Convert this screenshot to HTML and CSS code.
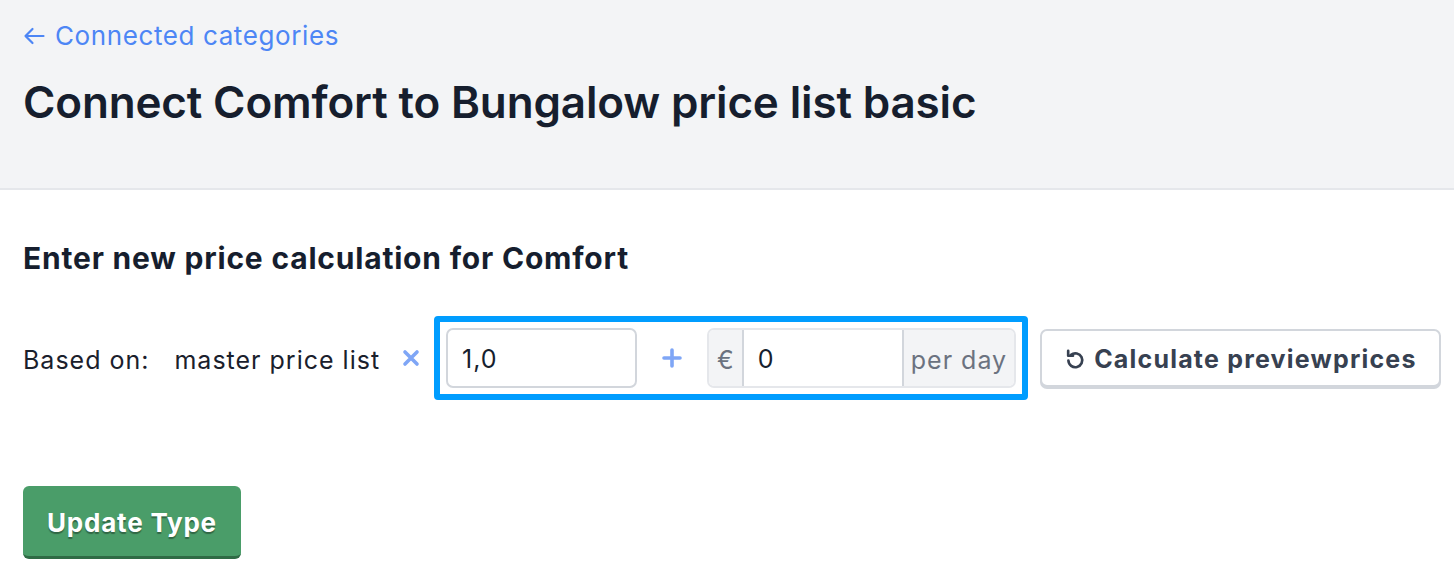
FILE: index.html
```html
<!DOCTYPE html>
<html lang="en">
<head>
<meta charset="utf-8">
<title>Connect Comfort to Bungalow price list basic</title>
<link rel="stylesheet" href="styles.css">
</head>
<body>
<header class="page-header">
  <a class="back-link" href="#"><svg class="arrow" viewBox="0 0 22 20" width="22" height="20" aria-hidden="true"><path d="M20.5 10H2.5M9.5 3L2.5 10L9.5 17" fill="none" stroke="currentColor" stroke-width="2.2" stroke-linecap="round" stroke-linejoin="round"/></svg>Connected categories</a>
  <h1 class="title">Connect Comfort to Bungalow price list basic</h1>
</header>
<main class="content">
  <h2 class="section-title">Enter new price calculation for Comfort</h2>
  <div class="calc-row">
    <span class="label">Based on:</span>
    <span class="source">master price list</span>
    <svg class="times" viewBox="0 0 18 18" width="18" height="18" aria-hidden="true"><path d="M3 3L15 15M15 3L3 15" fill="none" stroke="currentColor" stroke-width="3.6" stroke-linecap="round"/></svg>
    <div class="highlight">
      <input class="factor" type="text" value="1,0">
      <span class="plus"><svg viewBox="0 0 20 20" width="20" height="20" aria-hidden="true"><path d="M10 2V18M2 10H18" fill="none" stroke="currentColor" stroke-width="3.6" stroke-linecap="round"/></svg></span>
      <div class="group">
        <span class="addon addon-left">&euro;</span>
        <input class="amount" type="text" value="0">
        <span class="addon addon-right">per day</span>
      </div>
    </div>
    <button class="btn-secondary" type="button">
      <svg class="icon" viewBox="0 0 20 20" width="22" height="24" aria-hidden="true"><path d="M6.4 6.2A6.3 6.3 0 1 1 4 11.4" fill="none" stroke="currentColor" stroke-width="2.4" stroke-linecap="round"/><path d="M3.8 2.6v4.4h4.4" fill="none" stroke="currentColor" stroke-width="2.4" stroke-linecap="round" stroke-linejoin="round"/></svg>
      Calculate previewprices
    </button>
  </div>
  <button class="btn-primary" type="button">Update Type</button>
</main>
</body>
</html>
```

FILE: styles.css
```css
* { box-sizing: border-box; }
html, body { margin: 0; padding: 0; background: #ffffff; }
body {
  font-family: Inter, "Noto Sans", "Liberation Sans", sans-serif;
  color: #1a202c;
}
.page-header {
  background: #f3f4f6;
  border-bottom: 2px solid #e5e7eb;
  height: 190px;
  padding: 20px 23px 0;
}
.back-link {
  display: inline-flex;
  align-items: center;
  gap: 10px;
  color: #4d86f5;
  text-decoration: none;
  font-size: 26px;
  letter-spacing: 0.6px;
  line-height: 32px;
}
.title {
  margin: 22px 0 0;
  font-size: 44px;
  font-weight: 600;
  line-height: 56px;
  letter-spacing: -0.15px;
  color: #161e2e;
}
.content { padding: 50px 23px 0; }
.section-title {
  margin: 0;
  font-size: 30px;
  font-weight: 700;
  line-height: 36px;
  letter-spacing: 0.8px;
  color: #161e2e;
}
.calc-row {
  display: flex;
  align-items: center;
  margin-top: 40px;
  white-space: nowrap;
}
.calc-row > * { flex: none; }
.label, .source {
  font-size: 25px;
  letter-spacing: 1px;
  color: #1a202c;
  padding-top: 3px;
}
.source { margin-left: 25px; }
.times {
  margin: 0 14px 0 22px;
  color: #7fa6f6;
}
.highlight {
  display: flex;
  align-items: center;
  border: 6px solid #009dff;
  border-radius: 4px;
  padding: 6px;
}
input {
  font-family: inherit;
  font-size: 25px;
  letter-spacing: 1px;
  color: #161e2e;
  outline: none;
  padding-top: 3px;
}
.factor {
  width: 191px;
  height: 60px;
  border: 2px solid #d2d6dc;
  border-radius: 7px;
  padding-left: 14px;
  padding-right: 14px;
  background: #fff;
}
.plus {
  width: 70px;
  display: flex;
  justify-content: center;
  color: #7fa6f6;
}
.group {
  display: flex;
  height: 60px;
  border: 2px solid #e5e7eb;
  border-radius: 7px;
  overflow: hidden;
}
.addon {
  display: flex;
  align-items: center;
  background: #f3f4f6;
  color: #6b7280;
  font-size: 25px;
  letter-spacing: 1px;
  white-space: nowrap;
  padding-top: 3px;
}
.addon-left { padding-left: 8px; padding-right: 7px; border-right: 2px solid #d2d6dc; }
.addon-right { padding-left: 7px; padding-right: 7px; border-left: 2px solid #d2d6dc; }
.amount {
  width: 158px;
  border: 0;
  padding-left: 14px;
  padding-right: 14px;
  background: #fff;
}
.btn-secondary {
  margin-left: 12px;
  display: inline-flex;
  align-items: center;
  gap: 8px;
  height: 58px;
  padding: 2px 22px 0;
  background: #fff;
  border: 2px solid #d2d6dc;
  border-radius: 7px;
  box-shadow: 0 2px 0 #d2d6dc;
  font-family: inherit;
  font-size: 25px;
  letter-spacing: 1.2px;
  font-weight: 700;
  color: #374151;
  white-space: nowrap;
}
.icon { color: #374151; flex: none; }
.btn-primary {
  display: block;
  margin-top: 86px;
  height: 73px;
  padding: 2px 24px 0;
  background: #4a9d69;
  border: 0;
  border-bottom: 3px solid #2f6b45;
  border-radius: 6px;
  color: #fff;
  font-family: inherit;
  font-size: 26px;
  letter-spacing: 0.8px;
  font-weight: 700;
  text-shadow: 0 2px 1px rgba(0,0,0,0.35);
}
```
